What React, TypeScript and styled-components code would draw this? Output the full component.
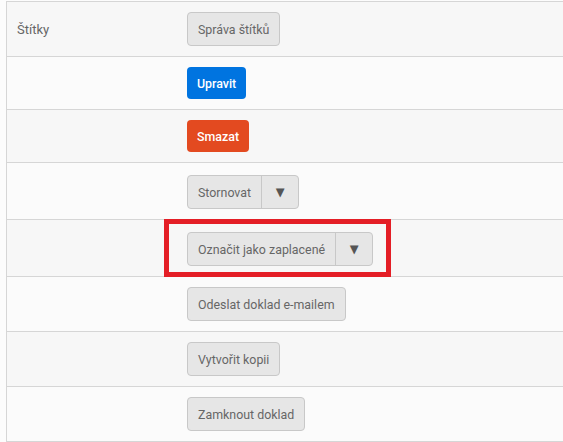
import React from 'react';
import styled, { createGlobalStyle } from 'styled-components';

const GlobalStyle = createGlobalStyle`
  html, body {
    margin: 0;
    padding: 0;
    background: #fcfcfc;
    font-family: Roboto, "Liberation Sans", Arial, sans-serif;
  }
`;

const Page = styled.div`
  padding: 1px 0 0 6px;
  height: 442px;
  overflow: hidden;
`;

const Table = styled.div`
  border-left: 1px solid #d6d6d6;
  border-top: 1px solid #d6d6d6;
`;

const Row = styled.div<{ $odd: boolean }>`
  display: grid;
  grid-template-columns: 180px 1fr;
  align-items: center;
  background: ${(p) => (p.$odd ? '#f7f7f7' : '#fbfbfb')};
  border-bottom: 1px solid #d6d6d6;
`;

const Label = styled.div`
  padding-left: 10px;
  font-size: 13px;
  color: #666;
`;

const Cell = styled.div`
  padding: 10px 0;
  display: flex;
  align-items: center;
`;

type Variant = 'default' | 'primary' | 'danger';

const bg: Record<Variant, string> = {
  default: '#e6e6e6',
  primary: '#0074e0',
  danger: '#e34a20',
};

const Button = styled.button<{ $variant?: Variant }>`
  height: ${(p) => (p.$variant && p.$variant !== 'default' ? '32px' : '34px')};
  padding: 0 10px;
  border-radius: 4px;
  font-family: inherit;
  font-size: 12.4px;
  font-weight: ${(p) => (p.$variant && p.$variant !== 'default' ? 500 : 400)};
  color: ${(p) => (p.$variant && p.$variant !== 'default' ? '#fff' : '#666')};
  background: ${(p) => bg[p.$variant ?? 'default']};
  border: ${(p) => (p.$variant && p.$variant !== 'default' ? 'none' : '1px solid #c8c8c8')};
  cursor: pointer;
`;

const Split = styled.div`
  position: relative;
  display: inline-flex;
  margin-top: 2px;
  border: 1px solid #c8c8c8;
  border-radius: 4px;
  background: #e6e6e6;
  height: 32px;
`;

const SplitMain = styled.button`
  border: none;
  background: transparent;
  padding: 0 10px;
  font-family: inherit;
  font-size: 12.4px;
  color: #666;
  border-right: 1px solid #c8c8c8;
`;

const SplitArrow = styled.button`
  width: 36px;
  border: none;
  background: transparent;
  font-family: "DejaVu Sans", sans-serif;
  font-size: 11.5px;
  color: #555;
  padding: 0;
`;

const Highlight = styled.span`
  position: absolute;
  left: -24px;
  right: -19px;
  top: -14px;
  bottom: -12px;
  border: 5px solid #e41e26;
  pointer-events: none;
`;

const SplitButton: React.FC<{ label: string; highlight?: boolean }> = ({ label, highlight }) => (
  <Split>
    <SplitMain>{label}</SplitMain>
    <SplitArrow>▼</SplitArrow>
    {highlight && <Highlight />}
  </Split>
);

const rows: { label?: string; content: React.ReactNode }[] = [
  { label: 'Štítky', content: <Button>Správa štítků</Button> },
  { content: <Button $variant="primary">Upravit</Button> },
  { content: <Button $variant="danger">Smazat</Button> },
  { content: <SplitButton label="Stornovat" /> },
  { content: <SplitButton label="Označit jako zaplacené" highlight /> },
  { content: <Button>Odeslat doklad e-mailem</Button> },
  { content: <Button>Vytvořit kopii</Button> },
  { content: <Button>Zamknout doklad</Button> },
];

export default function App() {
  return (
    <>
      <GlobalStyle />
      <Page>
        <Table>
          {rows.map((r, i) => (
            <Row key={i} $odd={i % 2 === 0}>
              <Label>{r.label}</Label>
              <Cell>{r.content}</Cell>
            </Row>
          ))}
        </Table>
      </Page>
    </>
  );
}
